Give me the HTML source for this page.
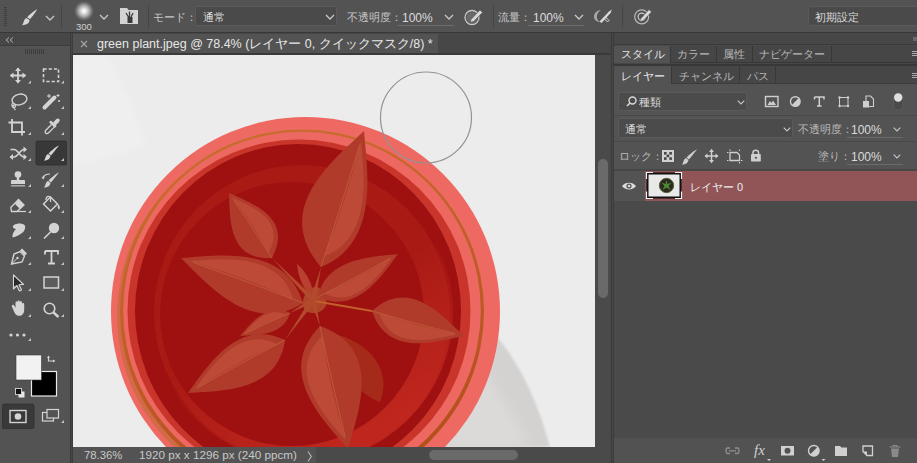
<!DOCTYPE html>
<html><head><meta charset="utf-8">
<style>
*{margin:0;padding:0;box-sizing:border-box}
html,body{width:917px;height:463px;overflow:hidden;background:#2b2b2b;font-family:"Liberation Sans",sans-serif;color:#d4d4d4}
.a{position:absolute}
.t{position:absolute;white-space:nowrap;font-size:12px;line-height:14px}
svg{position:absolute;overflow:visible}
</style></head><body>
<!-- options bar -->
<div class="a" id="opt" style="left:0;top:0;width:917px;height:32px;background:#535353">
<div class="a" style="left:4px;top:7px;width:3px;height:19px;background:repeating-linear-gradient(#3e3e3e 0 1px,transparent 1px 2px)"></div>
<svg width="20" height="20" style="left:20px;top:8px" viewBox="0 0 20 20"><path d="M17.2 1.3 C16 3.5 12.5 8.5 10 11.3 L7.2 9.2 C9.8 6.3 14.8 2.5 17.2 1.3Z" fill="#d8d8d8"/><path d="M6.6 10 L9.6 12.3 C9.2 15.5 6.5 17 2 17.2 C4 15.2 3.5 11.2 6.6 10Z" fill="#d8d8d8"/></svg>
<svg width="10" height="6" style="left:45px;top:15px" viewBox="0 0 10 6"><path d="M1 1 L5 5 L9 1" fill="none" stroke="#c8c8c8" stroke-width="1.3"/></svg>
<div class="a" style="left:61px;top:5px;width:1px;height:23px;background:#454545"></div>
<div class="a" style="left:74px;top:1px;width:20px;height:20px;border-radius:50%;background:radial-gradient(circle,#ffffff 0,#f0f0f0 12%,rgba(200,200,200,0.75) 38%,rgba(150,150,150,0.35) 58%,rgba(83,83,83,0) 72%)"></div>
<div class="t" style="left:76px;top:22px;font-size:9.5px;line-height:10px;color:#d0d0d0">300</div>
<svg width="10" height="6" style="left:99px;top:14px" viewBox="0 0 10 6"><path d="M1 1 L5 5 L9 1" fill="none" stroke="#c8c8c8" stroke-width="1.3"/></svg>
<svg width="19" height="18" style="left:120px;top:7px" viewBox="0 0 19 18"><path d="M0 1 H7 L8.5 3 H18 V17 H0Z" fill="#d4d4d4"/><path d="M6 6 L8.5 10 M9.5 4.5 V10 M13 6 L11 10" stroke="#3a3a3a" stroke-width="1.3"/><rect x="7.5" y="10" width="5" height="6" fill="#3a3a3a"/></svg>
<div class="a" style="left:148px;top:5px;width:1px;height:23px;background:#454545"></div>
<div class="t" style="left:153px;top:10px;color:#c6c6c6;font-size:11px">モード：</div>
<div class="a" style="left:195px;top:6px;width:142px;height:20px;background:#4a4a4a;border:1px solid #5a5a5a;border-radius:2px"></div>
<div class="t" style="left:203px;top:10px;color:#dcdcdc;font-size:11px">通常</div>
<svg width="10" height="6" style="left:325px;top:14px" viewBox="0 0 10 6"><path d="M1 1 L5 5 L9 1" fill="none" stroke="#c8c8c8" stroke-width="1.3"/></svg>
<div class="t" style="left:347px;top:10px;color:#c6c6c6;font-size:11px">不透明度：</div>
<div class="t" style="left:402px;top:11px;color:#dcdcdc">100%</div>
<div class="a" style="left:398px;top:25px;width:56px;height:1px;background:#6e6e6e"></div>
<svg width="10" height="6" style="left:444px;top:14px" viewBox="0 0 10 6"><path d="M1 1 L5 5 L9 1" fill="none" stroke="#c8c8c8" stroke-width="1.3"/></svg>
<svg width="30" height="30" viewBox="455 0 30 30" style="left:455px;top:0">
<circle cx="472" cy="17.5" r="7" fill="none" stroke="#c8c8c8" stroke-width="1.3"/>
<circle cx="472" cy="17.5" r="5.5" fill="#6a6a6a"/>
<path d="M471 19.5 L480 10 L482.5 12.5 L473.5 21.5 L470.3 22.3Z" fill="#dadada" stroke="#535353" stroke-width="0.6"/>
</svg>
<div class="a" style="left:493px;top:5px;width:1px;height:23px;background:#454545"></div>
<div class="t" style="left:498px;top:10px;color:#c6c6c6;font-size:11px">流量：</div>
<div class="t" style="left:533px;top:11px;color:#dcdcdc">100%</div>
<div class="a" style="left:528px;top:25px;width:56px;height:1px;background:#6e6e6e"></div>
<svg width="10" height="6" style="left:574px;top:14px" viewBox="0 0 10 6"><path d="M1 1 L5 5 L9 1" fill="none" stroke="#c8c8c8" stroke-width="1.3"/></svg>
<svg width="30" height="30" viewBox="590 0 30 30" style="left:590px;top:0">
<path d="M601 10 C596.5 10.5 594 13.5 594 16.5 C594 19.5 596.5 22 600 22 C597.5 20.5 596.8 18.5 596.8 16.5 C596.8 14 598.5 11.5 601 10Z" fill="#a8a8a8"/>
<path d="M599.5 21.5 L609 11.5 L611.8 9.5 L610.8 12.8 L601.5 23Z" fill="#dadada"/>
<path d="M604 18.5 L607.5 22 L609 20.5 L605.5 17Z" fill="none" stroke="#dadada" stroke-width="1"/>
</svg>
<div class="a" style="left:622px;top:5px;width:1px;height:23px;background:#454545"></div>
<svg width="30" height="30" viewBox="630 0 30 30" style="left:630px;top:0">
<circle cx="641.7" cy="16.8" r="7" fill="none" stroke="#b8b8b8" stroke-width="1.2"/>
<circle cx="641.7" cy="16.8" r="3.6" fill="none" stroke="#c8c8c8" stroke-width="1.2"/>
<path d="M640.5 19 L649 9.5 L651.5 12 L643 20.8 L639.8 21.8Z" fill="#dadada" stroke="#535353" stroke-width="0.6"/>
</svg>
<div class="a" style="left:808px;top:6px;width:115px;height:20px;background:#4a4a4a;border:1px solid #5a5a5a;border-radius:2px"></div>
<div class="t" style="left:815px;top:10px;color:#dcdcdc;font-size:11px">初期設定</div>
</div>
<div class="a" style="left:0;top:32px;width:917px;height:1px;background:#383838"></div><div class="a" style="left:0;top:33px;width:917px;height:1px;background:#404040"></div>

<!-- left toolbar -->
<div class="a" style="left:0;top:33px;width:70px;height:430px;background:#535353"></div>
<div class="a" style="left:0;top:33px;width:70px;height:13px;background:#474747;border-bottom:1px solid #3c3c3c"></div>
<div class="a" style="left:70px;top:33px;width:1px;height:430px;background:#3a3a3a"></div><div class="a" style="left:71px;top:33px;width:1px;height:430px;background:#474747"></div><div class="a" style="left:72px;top:33px;width:1px;height:430px;background:#3c3c3c"></div>
<svg width="70" height="429" viewBox="0 34 70 429" style="left:0;top:34px">
<path d="M9 37.5 L6 40 L9 42.5 M13 37.5 L10 40 L13 42.5" fill="none" stroke="#b0b0b0" stroke-width="1"/>
<g fill="#3c3c3c"><rect x="25" y="49" width="1" height="5"/><rect x="27" y="49" width="1" height="5"/><rect x="29" y="49" width="1" height="5"/><rect x="31" y="49" width="1" height="5"/><rect x="33" y="49" width="1" height="5"/><rect x="35" y="49" width="1" height="5"/><rect x="37" y="49" width="1" height="5"/><rect x="39" y="49" width="1" height="5"/><rect x="41" y="49" width="1" height="5"/><rect x="43" y="49" width="1" height="5"/></g>
<!-- active brush bg -->
<rect x="36" y="141" width="30.5" height="24" rx="1.5" fill="#383838" stroke="#2f2f2f" stroke-width="0.8"/>
<rect x="2.5" y="404" width="31.5" height="24.5" rx="1.5" fill="#393939" stroke="#303030" stroke-width="0.8"/>
<g fill="#d4d4d4" stroke="#d4d4d4">
<!-- move -->
<path d="M18 68 V83 M10.5 75.5 H25.5" stroke-width="1.8" fill="none"/>
<path d="M18 67.5 L15 71 H21Z M18 83.5 L15 80 H21Z M10 75.5 L13.5 72.5 V78.5Z M26 75.5 L22.5 72.5 V78.5Z" stroke="none"/>
<!-- marquee -->
<rect x="43.5" y="69" width="15" height="12.5" fill="none" stroke-width="1.6" stroke-dasharray="3.2 2"/>
<!-- lasso -->
<ellipse cx="19.5" cy="99.5" rx="7.5" ry="5.3" transform="rotate(-12 19.5 99.5)" fill="none" stroke-width="1.4"/>
<path d="M12.5 103 C11 106 12.5 108 14.5 107.5 C16.5 107 15 104.5 13.5 105 C12.5 106 14 109 15.5 110" fill="none" stroke-width="1.2"/>
<!-- wand -->
<path d="M44.5 107.5 L54.5 97.5" stroke-width="4" stroke-linecap="round"/>
<path d="M49 94 v4 M47 96 h4 M58 94 v3 M56.5 95.5 h3 M59 100 v2 M58 101 h2" stroke-width="1" fill="none"/>
<!-- crop -->
<path d="M12 119 V132 H25 M8.5 122.5 H22 V135.5" fill="none" stroke-width="1.8"/>
<!-- eyedropper -->
<path d="M51.5 124.5 L45.8 130.2 C44.8 131.2 45 133.2 46.2 133.6 C47.2 133.9 48 133.4 48.6 132.8 L54.3 127.1" fill="none" stroke-width="1.3"/>
<path d="M50 121.3 L55.7 127" stroke-width="2.6" fill="none"/>
<path d="M53 122.5 L56.2 119.3 C57.2 118.3 58.8 118.4 59.4 119.3 C60 120.3 59.7 121.5 58.8 122.3 L55.5 125.5Z" stroke="none"/>
<!-- shuffle (content aware move) -->
<path d="M10.5 149.5 H14 C18 149.5 20 157 24 157 H26 M10.5 157 H14 C18 157 20 149.5 24 149.5 H26" fill="none" stroke-width="1.6"/>
<path d="M27 149.5 L23.5 146.5 V152.5Z M9.5 157 L13 154 V160Z M27 157 L23.5 154 V160Z" stroke="none"/>
<!-- brush -->
<path d="M59 145.5 C57 148 53 153 51 155.5 L48.5 153.5 C51 151 56 146.5 59 145.5Z" stroke="none"/>
<path d="M48 154 L50.5 156 C50 159 47.5 160.5 44 160.8 C45.5 158.5 45.5 155 48 154Z" stroke="none"/>
<!-- stamp -->
<circle cx="18" cy="174.5" r="3.3" stroke="none"/>
<path d="M16.8 177 V180 H12 C11.5 180 11 180.5 11 181 V184 H25 V181 C25 180.5 24.5 180 24 180 H19.2 V177Z" stroke="none"/>
<rect x="11" y="185" width="14" height="1.6" stroke="none" fill="#a8a8a8"/>
<!-- history brush -->
<path d="M59 172.5 C57 175 53 180 51 182.5 L48.5 180.5 C51 178 56 173.5 59 172.5Z" stroke="none"/>
<path d="M48 181 L50.5 183 C50 186 47.5 187.5 44 187.8 C45.5 185.5 45.5 182 48 181Z" stroke="none"/>
<path d="M50 174 C47 174 44.5 175 43 177" fill="none" stroke-width="1.2"/>
<path d="M41.5 177.5 L45 176 L43.5 179.5Z" stroke="none"/>
<!-- eraser -->
<path d="M10.8 207.5 L18.5 199.5 L24 205 L17 211.5 H11.5Z" fill="none" stroke-width="1.3"/>
<path d="M15 204 L18.5 199.5 L24 205 L20 209Z" stroke="none"/>
<path d="M17 211.5 H26" stroke-width="1.2"/>
<!-- bucket -->
<path d="M43.5 204 L50.5 197 L57.5 204 L50.5 211Z" fill="none" stroke-width="1.5"/>
<path d="M46 200 C46 196 50 195 50.5 198.5 V202" fill="none" stroke-width="1.2"/>
<path d="M58 204 C60 206 60.5 208 59 209.5 C57.5 208.5 57.5 206 58 204Z" stroke="none"/>
<!-- smudge -->
<path d="M12.5 237.5 C12 234 14 231 16 229 C13 229 12 226 14 225 C17 223 22 223 24.5 225 C26 227 25 231 22 233 C19 235 16.5 236.5 12.5 237.5Z" stroke="none"/>
<!-- dodge -->
<circle cx="54" cy="228" r="5.2" stroke="none"/>
<path d="M44 238.5 L50.5 232" stroke-width="1.6" fill="none"/>
<!-- pen -->
<path d="M11.5 264 L14 254 L20 251.5 L24.5 256 L22 262Z" fill="none" stroke-width="1.4"/>
<path d="M20 250.5 L22 248.5 L27 253.5 L25 255.5Z" stroke="none"/>
<path d="M11.5 264 L17 258.5" stroke-width="1" fill="none"/>
<circle cx="17.5" cy="258" r="1.2" stroke="none"/>
<!-- type -->
<path d="M45 251 H58 V254.5 M45 251 V254.5 M51.5 251 V263.5 M48 263.5 H55" fill="none" stroke-width="1.8"/>
<!-- path selection -->
<path d="M13.5 275 V289 L16.8 285.5 L19.5 291 L21.5 290 L19 284.5 H23.5Z" fill="none" stroke-width="1.2" stroke-linejoin="round"/>
<path d="M14 276.5 V286 L21.5 283.5Z" stroke="none" fill="#2a2a2a"/>
<!-- rectangle -->
<rect x="44" y="277" width="14.5" height="11" fill="#5c5c5c" stroke-width="1.5"/>
<!-- hand -->
<path d="M13 309 C11.5 306.5 11.5 305 12.8 304.8 C14 304.6 15 307 15.5 308 V302.5 C15.5 301 17.5 301 17.5 302.5 V307 V301.5 C17.5 300 19.8 300 19.8 301.5 V307 V302.3 C19.8 300.8 22 300.8 22 302.3 V307.5 V304 C22 302.5 24.2 302.5 24.2 304 V310 C24.2 313.5 22 315.8 19 315.8 C16 315.8 14.5 313 13 309Z" stroke="none"/>
<!-- zoom -->
<circle cx="49.5" cy="308.5" r="5.3" fill="none" stroke-width="1.6"/>
<path d="M53.5 312.5 L58.5 317" stroke-width="2.4" fill="none"/>
<!-- dots -->
<circle cx="11" cy="335" r="1.6" stroke="none"/><circle cx="17.5" cy="335" r="1.6" stroke="none"/><circle cx="24" cy="335" r="1.6" stroke="none"/>
<!-- swap -->
<path d="M48.5 356.5 V361 H54" fill="none" stroke-width="1.2"/>
<path d="M47 358 L48.5 355.5 L50 358Z M53 359.5 L55.5 361 L53 362.5Z" stroke="none"/>
<!-- default colors -->
<rect x="18.5" y="391.5" width="6" height="6" fill="#e8e8e8" stroke="none"/>
<rect x="15.5" y="388.5" width="6" height="6" fill="#111" stroke="#e8e8e8" stroke-width="0.8"/>
<!-- quick mask -->
<rect x="10" y="410.5" width="16" height="12" fill="none" stroke-width="1.4"/>
<circle cx="18" cy="416.5" r="3.3" stroke="none"/>
<!-- screen mode -->
<rect x="42.5" y="412.5" width="11" height="8.5" fill="#535353" stroke-width="1.2"/>
<rect x="47" y="409.5" width="11.5" height="8.5" fill="#535353" stroke-width="1.2"/>
</g>
<!-- swatches -->
<rect x="31.5" y="371.5" width="25" height="24.5" fill="#000" stroke="#eaeaea" stroke-width="1.2"/>
<rect x="16" y="355" width="25.5" height="25" fill="#f2f2f2" stroke="#3a3a3a" stroke-width="0.6"/>
<path d="M31 80.5 V83.5 H28Z" fill="#c4c4c4"/><path d="M64 80.5 V83.5 H61Z" fill="#c4c4c4"/><path d="M31 106 V109 H28Z" fill="#c4c4c4"/><path d="M64 106 V109 H61Z" fill="#c4c4c4"/><path d="M31 132 V135 H28Z" fill="#c4c4c4"/><path d="M64 132 V135 H61Z" fill="#c4c4c4"/><path d="M31 158 V161 H28Z" fill="#c4c4c4"/><path d="M64 158 V161 H61Z" fill="#c4c4c4"/><path d="M31 184 V187 H28Z" fill="#c4c4c4"/><path d="M64 184 V187 H61Z" fill="#c4c4c4"/><path d="M31 210 V213 H28Z" fill="#c4c4c4"/><path d="M64 210 V213 H61Z" fill="#c4c4c4"/><path d="M31 236 V239 H28Z" fill="#c4c4c4"/><path d="M64 236 V239 H61Z" fill="#c4c4c4"/><path d="M31 262 V265 H28Z" fill="#c4c4c4"/><path d="M64 262 V265 H61Z" fill="#c4c4c4"/><path d="M31 288 V291 H28Z" fill="#c4c4c4"/><path d="M64 288 V291 H61Z" fill="#c4c4c4"/><path d="M31 314 V317 H28Z" fill="#c4c4c4"/><path d="M64 314 V317 H61Z" fill="#c4c4c4"/><path d="M31 338 V341 H28Z" fill="#c4c4c4"/><path d="M64 420 V423 H61Z" fill="#c4c4c4"/>
</svg>

<!-- doc tab bar -->
<div class="a" style="left:73px;top:33px;width:538px;height:22px;background:#474747"></div><div class="a" style="left:73px;top:53px;width:538px;height:2px;background:#3a3a3a"></div>
<div class="a" style="left:73px;top:34px;width:365px;height:19px;background:#535353"></div>
<svg width="8" height="8" style="left:80px;top:40px" viewBox="0 0 8 8"><path d="M1 1 L7 7 M7 1 L1 7" stroke="#a8a8a8" stroke-width="1.1"/></svg>
<div class="t" style="left:97px;top:37px;font-size:12.5px;color:#e6e6e6">green plant.jpeg @ 78.4% (レイヤー 0, クイックマスク/8) *</div>

<!-- canvas -->
<div class="a" id="canvas" style="left:73px;top:55px;width:522px;height:392px;background:#ececec;overflow:hidden">
<svg width="522" height="392" viewBox="73 55 522 392" style="left:0;top:0">
<defs>
<filter id="bl" x="-20%" y="-20%" width="140%" height="140%"><feGaussianBlur stdDeviation="6"/></filter>
<filter id="bl2"><feGaussianBlur stdDeviation="1.2"/></filter>
</defs>
<!-- top-left texture -->
<defs><pattern id="dp" width="3" height="3" patternUnits="userSpaceOnUse"><rect width="3" height="3" fill="#ececec"/><rect width="1.5" height="1.5" fill="#f4f4f4"/><rect x="1.5" y="1.5" width="1.5" height="1.5" fill="#f2f2f2"/></pattern><filter id="bl3"><feGaussianBlur stdDeviation="2.5"/></filter></defs>
<path d="M72 55 L108 55 C120 80 135 115 146 145 C130 152 100 160 72 165Z" fill="url(#dp)" filter="url(#bl3)"/>
<!-- shadow -->
<path d="M480 320 C510 345 535 390 550 447 L300 447 Z" fill="#d4d2d1" filter="url(#bl2)"/>
<path d="M470 355 C495 385 515 415 528 447 L440 447 Z" fill="#dcdad9" filter="url(#bl)"/>
<!-- pot -->
<defs>
<linearGradient id="rg" x1="0" y1="0" x2="0.3" y2="1"><stop offset="0" stop-color="#c8702e"/><stop offset="0.5" stop-color="#c2602a"/><stop offset="1" stop-color="#b4501e"/></linearGradient>
<linearGradient id="cg" x1="370" y1="270" x2="440" y2="400" gradientUnits="userSpaceOnUse"><stop offset="0" stop-color="#fff" stop-opacity="0"/><stop offset="1" stop-color="#fff" stop-opacity="1"/></linearGradient>
<mask id="cm"><rect x="72" y="55" width="523" height="392" fill="url(#cg)"/></mask>
</defs>
<circle cx="305.5" cy="311.5" r="194.5" fill="#ef6963"/>
<circle cx="299" cy="315" r="182" fill="#d26a48"/>
<circle cx="302" cy="311.5" r="182" fill="url(#rg)"/>
<circle cx="302" cy="310.5" r="178.8" fill="#ec6860"/>
<circle cx="299" cy="311" r="171.5" fill="#c9352b"/>
<ellipse cx="298" cy="311" rx="163" ry="167" fill="#9e1110"/>
<circle cx="302" cy="313" r="148" fill="#a91a15"/>
<circle cx="302" cy="312" r="151" fill="#c42a20" mask="url(#cm)" opacity="0.85"/>
<circle cx="292" cy="314" r="132" fill="#9e1110"/>
<g id="leaves">
<path d="M331 333 C372 342 392 372 380 402 C362 396 338 372 331 333Z" fill="#a62a1a"/>
<path d="M297 264 C305 270 314 285 313 298 C305 292 298 278 297 264Z" fill="#b84030"/>
<path d="M316 286 C324 290 328 298 326 306 C322 313 312 315 306 311 C300 305 302 292 316 286Z" fill="#b0442a"/>
<path d="M321.0 267.0 C379.1 243.5 367.7 174.1 364.0 131.0 C330.9 162.4 271.6 209.5 321.0 267.0 Z" fill="#b03b2a"/><path d="M324.4 256.1 C372.1 238.3 364.3 176.0 361.0 140.5 Q346.4 200.2 324.4 256.1 Z" fill="#bc4a37"/><path d="M321.0 267.0 Q343.3 199.2 359.7 144.6" fill="none" stroke="#c46a40" stroke-width="0.9" opacity="0.7"/>
<path d="M272.0 258.0 C293.5 217.6 252.5 203.6 229.0 193.0 C230.1 218.4 228.1 260.9 272.0 258.0 Z" fill="#b03b2a"/><path d="M268.6 252.8 C286.9 220.1 251.5 206.2 232.0 197.6 Q253.4 223.6 268.6 252.8 Z" fill="#bc4a37"/><path d="M272.0 258.0 Q251.2 225.1 233.3 199.5" fill="none" stroke="#c46a40" stroke-width="0.9" opacity="0.7"/>
<path d="M303.0 303.0 C285.6 245.1 220.9 255.1 181.0 258.0 C209.4 286.1 252.1 335.7 303.0 303.0 Z" fill="#b03b2a"/><path d="M293.2 299.4 C280.2 252.0 222.4 258.6 189.5 261.1 Q243.4 276.6 293.2 299.4 Z" fill="#bc4a37"/><path d="M303.0 303.0 Q242.3 279.7 193.2 262.5" fill="none" stroke="#c46a40" stroke-width="0.9" opacity="0.7"/>
<path d="M318.0 297.0 C356.6 315.1 381.2 276.4 398.0 254.0 C370.7 256.9 326.1 258.4 318.0 297.0 Z" fill="#b03b2a"/><path d="M324.4 293.6 C355.4 309.1 378.6 275.5 392.4 257.0 Q359.4 278.1 324.4 293.6 Z" fill="#bc4a37"/><path d="M318.0 297.0 Q358.4 276.2 390.0 258.3" fill="none" stroke="#c46a40" stroke-width="0.9" opacity="0.7"/>
<path d="M372.0 311.0 C387.2 356.8 434.6 342.3 464.0 336.0 C442.0 315.0 408.8 277.2 372.0 311.0 Z" fill="#b03b2a"/><path d="M379.4 313.0 C390.9 350.7 433.4 339.6 457.6 334.2 Q417.1 326.8 379.4 313.0 Z" fill="#bc4a37"/><path d="M372.0 311.0 Q417.8 324.3 454.8 333.5" fill="none" stroke="#c46a40" stroke-width="0.9" opacity="0.7"/>
<path d="M290.0 313.0 C267.6 301.2 251.1 323.3 240.0 336.0 C256.6 335.2 283.6 335.9 290.0 313.0 Z" fill="#b03b2a"/><path d="M286.0 314.8 C268.0 304.8 252.6 323.9 243.5 334.4 Q264.3 322.9 286.0 314.8 Z" fill="#bc4a37"/><path d="M290.0 313.0 Q264.7 323.8 245.0 333.7" fill="none" stroke="#c46a40" stroke-width="0.9" opacity="0.7"/>
<path d="M285.0 340.0 C237.6 317.8 208.2 365.4 188.0 393.0 C222.1 390.9 278.1 391.9 285.0 340.0 Z" fill="#b03b2a"/><path d="M277.2 344.2 C239.1 325.2 211.3 366.5 194.8 389.3 Q234.8 363.3 277.2 344.2 Z" fill="#bc4a37"/><path d="M285.0 340.0 Q236.1 365.8 197.7 387.7" fill="none" stroke="#c46a40" stroke-width="0.9" opacity="0.7"/>
<path d="M320.0 326.0 C274.9 372.5 322.0 418.7 348.0 449.0 C359.0 410.3 382.8 347.9 320.0 326.0 Z" fill="#b03b2a"/><path d="M322.2 335.8 C284.5 372.9 324.5 415.5 346.0 440.4 Q329.5 388.5 322.2 335.8 Z" fill="#bc4a37"/><path d="M320.0 326.0 Q333.2 387.7 345.2 436.7" fill="none" stroke="#c46a40" stroke-width="0.9" opacity="0.7"/>
<path d="M314 301 L372 311" stroke="#c0602a" stroke-width="2" fill="none"/>
<path d="M315.4 300.6 L321.0 267.0 L310.6 299.4 Z" fill="#b24a2c"/>
<path d="M314.8 298.3 L272.0 258.0 L311.2 301.7 Z" fill="#b24a2c"/>
<path d="M312.3 297.6 L303.0 303.0 L313.7 302.4 Z" fill="#b24a2c"/>
<path d="M314.3 302.1 L318.0 297.0 L311.7 297.9 Z" fill="#b24a2c"/>
<path d="M311.8 297.8 L290.0 313.0 L314.2 302.2 Z" fill="#b24a2c"/>
<path d="M311.0 298.6 L285.0 340.0 L315.0 301.4 Z" fill="#b24a2c"/>
<path d="M310.6 300.6 L320.0 326.0 L315.4 299.4 Z" fill="#b24a2c"/>
</g>
</svg>
<svg width="522" height="392" viewBox="73 55 522 392" style="left:0;top:0">
<circle cx="426" cy="117.5" r="45.5" fill="none" stroke="#939393" stroke-width="1.2"/>
</svg>
</div>

<!-- vertical scrollbar -->
<div class="a" style="left:595px;top:55px;width:16px;height:408px;background:#4a4a4a"></div>
<div class="a" style="left:598px;top:159px;width:10px;height:139px;border-radius:5px;background:#6a6a6a"></div>

<!-- status bar -->
<div class="a" style="left:73px;top:447px;width:522px;height:16px;background:#4a4a4a"></div>
<div class="a" style="left:73px;top:447px;width:243px;height:16px;background:#535353"></div>
<div class="t" style="left:84px;top:448px;font-size:11.3px;color:#c8c8c8">78.36%</div>
<div class="t" style="left:139px;top:448px;font-size:11.7px;color:#c8c8c8">1920 px x 1296 px (240 ppcm)</div>
<svg width="6" height="12" style="left:306.5px;top:450.5px" viewBox="0 0 6 12"><path d="M1 0.5 L4.3 5.5 L1 10.5" fill="none" stroke="#b8b8b8" stroke-width="1.1"/></svg>
<div class="a" style="left:429px;top:450px;width:89px;height:10px;border-radius:5px;background:#6a6a6a"></div>

<!-- right panel -->
<div class="a" style="left:611px;top:33px;width:1px;height:430px;background:#3a3a3a"></div><div class="a" style="left:612px;top:33px;width:1px;height:430px;background:#474747"></div><div class="a" style="left:613px;top:33px;width:1px;height:430px;background:#3c3c3c"></div>
<div class="a" style="left:614px;top:33px;width:303px;height:430px;background:#4a4a4a"></div>
<!-- header strip -->
<div class="a" style="left:614px;top:33px;width:303px;height:12px;background:#474747;border-bottom:1px solid #3a3a3a"></div>
<!-- tab row 1 -->
<div class="a" style="left:614px;top:46px;width:303px;height:17px;background:#464646;border-bottom:1px solid #383838"></div>
<div class="a" style="left:614px;top:46px;width:56px;height:17px;background:#535353"></div>
<div class="a" style="left:670px;top:46px;width:1px;height:17px;background:#383838"></div>
<div class="a" style="left:716px;top:46px;width:1px;height:17px;background:#383838"></div>
<div class="a" style="left:752px;top:46px;width:1px;height:17px;background:#383838"></div>
<div class="a" style="left:831px;top:46px;width:1px;height:17px;background:#383838"></div>
<div class="t" style="left:621px;top:47px;color:#e8e8e8;font-size:11px">スタイル</div>
<div class="t" style="left:677px;top:47px;color:#b8b8b8;font-size:11px">カラー</div>
<div class="t" style="left:723px;top:47px;color:#b8b8b8;font-size:11px">属性</div>
<div class="t" style="left:759px;top:47px;color:#b8b8b8;font-size:11px">ナビゲーター</div>
<div class="a" style="left:614px;top:63px;width:303px;height:1px;background:#474747"></div>
<div class="a" style="left:614px;top:64px;width:303px;height:2px;background:#383838"></div>
<!-- tab row 2 -->
<div class="a" style="left:614px;top:66px;width:303px;height:18px;background:#464646;border-bottom:1px solid #3c3c3c"></div>
<div class="a" style="left:614px;top:66px;width:57px;height:18px;background:#535353"></div>
<div class="a" style="left:671px;top:66px;width:1px;height:18px;background:#383838"></div>
<div class="a" style="left:739px;top:66px;width:1px;height:18px;background:#383838"></div>
<div class="a" style="left:775px;top:66px;width:1px;height:18px;background:#383838"></div>
<div class="t" style="left:621px;top:69px;color:#e8e8e8;font-size:11px">レイヤー</div>
<div class="t" style="left:679px;top:69px;color:#b8b8b8;font-size:11px">チャンネル</div>
<div class="t" style="left:747px;top:69px;color:#b8b8b8;font-size:11px">パス</div>
<svg width="6" height="6" style="left:912px;top:51px" viewBox="0 0 6 6"><path d="M0 0.5H6M0 2.5H6M0 4.5H6" stroke="#b8b8b8" stroke-width="0.9"/></svg>
<svg width="6" height="6" style="left:912px;top:73px" viewBox="0 0 6 6"><path d="M0 0.5H6M0 2.5H6M0 4.5H6" stroke="#b8b8b8" stroke-width="0.9"/></svg>
<svg width="4" height="4" style="left:913px;top:37px" viewBox="0 0 4 4"><path d="M0 1H4M0 3H4" stroke="#a0a0a0" stroke-width="0.8"/></svg>
<!-- panel body top -->
<div class="a" style="left:671px;top:83px;width:246px;height:1px;background:#3c3c3c"></div><div class="a" style="left:614px;top:84px;width:303px;height:87px;background:#535353"></div>
<div class="a" style="left:618px;top:92px;width:129px;height:19px;background:#4b4b4b;border:1px solid #5a5a5a;border-radius:2px"></div>
<svg width="11" height="11" style="left:626px;top:96px" viewBox="0 0 11 11"><circle cx="6.5" cy="4.5" r="3.5" fill="none" stroke="#d8d8d8" stroke-width="1.4"/><path d="M4 7 L1 10" stroke="#d8d8d8" stroke-width="1.6"/></svg>
<div class="t" style="left:639px;top:95px;color:#dcdcdc;font-size:11px">種類</div>
<svg width="8" height="5" style="left:737px;top:100px" viewBox="0 0 8 5"><path d="M0.7 0.7 L4 4 L7.3 0.7" fill="none" stroke="#c8c8c8" stroke-width="1.1"/></svg>
<g></g>
<svg width="150" height="20" viewBox="760 92 150 20" style="left:760px;top:92px">
<g fill="#cfcfcf" stroke="#cfcfcf">
<rect x="765.5" y="96.5" width="12.5" height="10" fill="none" stroke-width="1.4"/>
<path d="M767.5 105 L770 101 L771.5 103 L773 100.5 L776 105Z" stroke="none"/>
<circle cx="795.3" cy="101.5" r="4.8" fill="none" stroke-width="1.4"/>
<path d="M798.7 98.1 A4.8 4.8 0 0 1 791.9 104.9Z" stroke="none"/>
<path d="M814.5 97 H824 V99.5 M814.5 97 V99.5 M819.3 97 V106 M817 106 H821.5" fill="none" stroke-width="1.5"/>
<rect x="839.5" y="97.5" width="8.5" height="8.5" fill="none" stroke-width="1"/>
<circle cx="839.5" cy="97.5" r="1.2" stroke="none"/><circle cx="848" cy="97.5" r="1.2" stroke="none"/><circle cx="839.5" cy="106" r="1.2" stroke="none"/><circle cx="848" cy="106" r="1.2" stroke="none"/>
<path d="M866 96 H870.5 L873.5 99 V106.5 H866Z" fill="none" stroke-width="1.1"/>
<rect x="863" y="101" width="6" height="6.5" stroke="none"/>
</g>
<rect x="893.5" y="93" width="9.5" height="17" rx="4.75" fill="#4a4a4a" stroke="#5e5e5e" stroke-width="0.8"/>
<circle cx="898.2" cy="97.5" r="4.2" fill="#e0e0e0"/>
</svg>
<div class="a" style="left:614px;top:115px;width:303px;height:1px;background:#494949"></div>
<div class="a" style="left:618px;top:118px;width:175px;height:20px;background:#4b4b4b;border:1px solid #5a5a5a;border-radius:2px"></div>
<div class="t" style="left:625px;top:122px;color:#dcdcdc;font-size:11px">通常</div>
<svg width="8" height="5" style="left:783px;top:127px" viewBox="0 0 8 5"><path d="M0.7 0.7 L4 4 L7.3 0.7" fill="none" stroke="#c8c8c8" stroke-width="1.1"/></svg>
<div class="t" style="left:798px;top:122px;color:#b8b8b8;font-size:11px">不透明度：</div>
<div class="t" style="left:851px;top:123px;color:#dcdcdc">100%</div>
<div class="a" style="left:847px;top:137px;width:56px;height:1px;background:#6a6a6a"></div>
<svg width="8" height="5" style="left:893px;top:127px" viewBox="0 0 8 5"><path d="M0.7 0.7 L4 4 L7.3 0.7" fill="none" stroke="#c8c8c8" stroke-width="1.1"/></svg>
<div class="a" style="left:614px;top:141px;width:303px;height:1px;background:#494949"></div>
<div class="t" style="left:619px;top:149px;color:#b8b8b8;font-size:11px">ロック：</div>
<svg width="110" height="18" viewBox="655 147 110 18" style="left:655px;top:147px">
<rect x="662" y="150" width="12" height="12" fill="#d0d0d0"/>
<g fill="#444"><rect x="664" y="152" width="2.6" height="2.6"/><rect x="669.3" y="152" width="2.6" height="2.6"/><rect x="666.6" y="154.6" width="2.6" height="2.6"/><rect x="664" y="157.3" width="2.6" height="2.6"/><rect x="669.3" y="157.3" width="2.6" height="2.6"/></g>
<g fill="#cfcfcf" stroke="#cfcfcf">
<path d="M697 149.5 C695 152 691 157 689 159.5 L686.5 157.5 C689 155 694 150.5 697 149.5Z" stroke="none"/>
<path d="M686 158 L688.5 160 C688 163 685.5 164.5 682 164.8 C683.5 162.5 683.5 159 686 158Z" stroke="none"/>
<path d="M711.5 149.5 V162.5 M705 156 H718" stroke-width="1.5" fill="none"/>
<path d="M711.5 149 L709 152 H714Z M711.5 163 L709 160 H714Z M704.5 156 L707.5 153.5 V158.5Z M718.5 156 L715.5 153.5 V158.5Z" stroke="none"/>
<path d="M730 152.5 H737 L739.5 155 V160.5 H730Z" fill="none" stroke-width="1.3"/><path d="M727 152.5 H728.5 M730 149.5 V151 M741 160.5 H742.5 M739.5 162 V163.5 M727 160.5 H728.5 M739.5 149.5 V151" fill="none" stroke-width="1"/>
<path d="M753 154 V152.5 C753 149.5 758.5 149.5 758.5 152.5 V154" fill="none" stroke-width="1.5"/>
<rect x="751" y="154" width="9.8" height="7.5" rx="0.8" stroke="none"/>
<circle cx="755.9" cy="157.8" r="1.1" fill="#535353" stroke="none"/>
</g>
</svg>
<div class="t" style="left:818px;top:149px;color:#b8b8b8;font-size:11px">塗り：</div>
<div class="t" style="left:851px;top:150px;color:#dcdcdc">100%</div>
<div class="a" style="left:847px;top:164px;width:56px;height:1px;background:#6a6a6a"></div>
<svg width="8" height="5" style="left:893px;top:154px" viewBox="0 0 8 5"><path d="M0.7 0.7 L4 4 L7.3 0.7" fill="none" stroke="#c8c8c8" stroke-width="1.1"/></svg>
<div class="a" style="left:614px;top:169px;width:303px;height:2px;background:#474747"></div>
<!-- layer row -->
<div class="a" style="left:614px;top:171px;width:31px;height:30px;background:#535353"></div>
<div class="a" style="left:645px;top:171px;width:272px;height:30px;background:#915457"></div>
<svg width="16" height="10" style="left:621px;top:181px" viewBox="0 0 16 10"><path d="M1 5 C4 0.5 12 0.5 15 5 C12 9.5 4 9.5 1 5Z" fill="#dcdcdc"/><circle cx="8" cy="5" r="2.6" fill="#535353"/><circle cx="8" cy="5" r="1.3" fill="#dcdcdc"/></svg>
<svg width="40" height="32" viewBox="644 170 40 32" style="left:644px;top:170px">
<rect x="647.5" y="173.5" width="33" height="24" fill="#e9e9e9" stroke="#111" stroke-width="2"/>
<path d="M646.5 179 V172.5 H653 M675 172.5 H681.5 V179 M681.5 191.5 V198.5 H675 M653 198.5 H646.5 V191.5" fill="none" stroke="#f4f4f4" stroke-width="1.2"/>
<circle cx="666.5" cy="185.5" r="7.2" fill="#2a2a20"/>
<circle cx="666.5" cy="185.5" r="7.2" fill="none" stroke="#5b6a3a" stroke-width="1"/>
<path d="M666.5 180 L667.5 184 L671.5 182.5 L668.5 186 L670.5 190 L666.5 187.5 L662.5 190 L664.5 186 L661.5 182.5 L665.5 184Z" fill="#4c8a34"/>
</svg>
<div class="t" style="left:690px;top:180px;color:#eeeeee;font-size:11px">レイヤー 0</div>
<!-- bottom bar -->
<div class="a" style="left:614px;top:438px;width:303px;height:25px;background:#525252"></div>
<svg width="190" height="25" viewBox="720 438 190 25" style="left:720px;top:438px">
<g fill="#d0d0d0" stroke="#d0d0d0">
<path d="M730 448 H727.5 C725.5 448 725.5 453.5 727.5 453.5 H730 M735 448 H737.5 C739.5 448 739.5 453.5 737.5 453.5 H735 M729 450.8 H736" fill="none" stroke="#8e8e8e" stroke-width="1.3"/>
<text x="754" y="455" font-family="Liberation Serif" font-style="italic" font-size="15" stroke="none" fill="#d0d0d0">fx</text>
<path d="M767 459 h4 l-2 2z" stroke="none"/>
<rect x="781" y="446" width="13" height="9.5" stroke="none"/>
<circle cx="787.5" cy="450.7" r="3" fill="#525252" stroke="none"/>
<circle cx="813.8" cy="450.8" r="5.3" fill="none" stroke-width="1.4"/>
<path d="M817.6 447 A5.3 5.3 0 0 1 810 454.6Z" stroke="none"/>
<path d="M821.5 459 h4 l-2 2z" stroke="none"/>
<path d="M835 446 H840 L841.5 447.5 H847 V456 H835Z" stroke="none"/>
<path d="M863 446 H872.5 V455.5 H867 L863 451.5Z" fill="none" stroke-width="1.3"/>
<path d="M863 451.5 H867 V455.5Z" stroke="none"/>
<path d="M891 448.5 H899 L898 457 H892Z" fill="#8a8a8a" stroke="none"/>
<path d="M889.5 447 H900.5 M893 447 V445.5 H897 V447" fill="none" stroke="#8a8a8a" stroke-width="1.2"/>
</g>
</svg>
</body></html>
